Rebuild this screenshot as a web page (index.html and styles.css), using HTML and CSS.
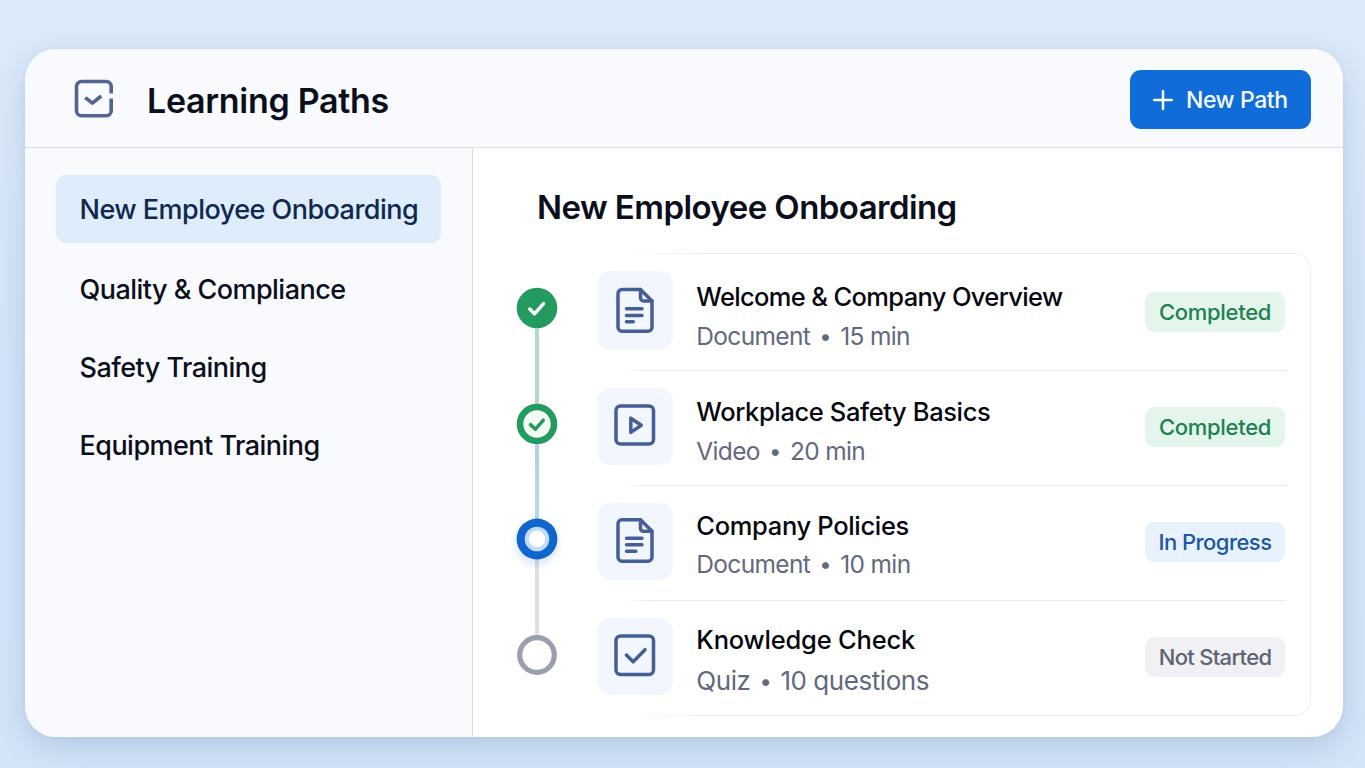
FILE: index.html
```html
<!DOCTYPE html>
<html lang="en">
<head>
<meta charset="utf-8">
<title>Learning Paths</title>
<link rel="stylesheet" href="styles.css">
</head>
<body>
<div class="app">
  <header class="header">
    <svg class="logo" viewBox="0 0 40 40" width="40" height="40">
      <path d="M37.2 14.5V7.5a5 5 0 0 0-5-5H7.5a5 5 0 0 0-5 5v24.2a5 5 0 0 0 5 5h24.7a5 5 0 0 0 5-5V19.5"/>
      <path d="M11.2 18.6l7.2 5.6 8.8-7.2"/>
    </svg>
    <h1 class="app-title">Learning Paths</h1>
    <button class="new-path">
      <svg viewBox="0 0 20 20" width="20" height="20"><path d="M10 1v18M1 10h18"/></svg>
      <span>New Path</span>
    </button>
  </header>
  <div class="body">
    <nav class="sidebar">
      <a class="nav-item active">New Employee Onboarding</a>
      <a class="nav-item">Quality &amp; Compliance</a>
      <a class="nav-item">Safety Training</a>
      <a class="nav-item">Equipment Training</a>
    </nav>
    <main class="content">
      <h2 class="path-title">New Employee Onboarding</h2>
      <div class="path">
        <div class="timeline">
          <svg class="dot" viewBox="0 0 42 42"><circle class="green-fill" cx="21" cy="21" r="20.3"/><path class="check white" d="M13.8 22.1l4.7 4.7 9-10.2"/></svg>
          <div class="line line-green"></div>
          <svg class="dot" viewBox="0 0 42 42"><circle class="green-ring" cx="21" cy="21" r="17"/><path class="check green" d="M14.5 21.6l4.9 4.6 8-9"/></svg>
          <div class="line line-blue"></div>
          <svg class="dot dot-current" viewBox="0 0 42 42"><circle class="blue-fill" cx="21" cy="21" r="20.4"/><circle class="blue-light" cx="21" cy="21" r="12.3"/><circle class="core" cx="21" cy="21" r="8.2"/></svg>
          <div class="line line-gray"></div>
          <svg class="dot" viewBox="0 0 42 42"><circle class="gray-ring" cx="21" cy="21" r="17.3"/></svg>
        </div>
        <div class="steps">
          <section class="step step-1">
            <div class="tile"><svg viewBox="0 0 48 48" width="48" height="48"><path d="M29.5 3.5H11a4 4 0 0 0-4 4v33.7a4 4 0 0 0 4 4h26a4 4 0 0 0 4-4V15z"/><path d="M29.5 3.5v8.5a3 3 0 0 0 3 3H41"/><path d="M15.5 22.8h15.5M15.5 29.5h15.5M15.5 35.8h6.8"/></svg></div>
            <div class="info"><h3 class="name">Welcome &amp; Company Overview</h3><p class="meta">Document<i>•</i>15 min</p></div>
            <span class="badge done">Completed</span>
          </section>
          <section class="step step-2">
            <div class="tile"><svg viewBox="0 0 48 48" width="48" height="48"><rect x="5" y="4" width="37.5" height="38" rx="4.5"/><path d="M19.8 16.2v14.2l10.5-7.1z"/></svg></div>
            <div class="info"><h3 class="name">Workplace Safety Basics</h3><p class="meta">Video<i>•</i>20 min</p></div>
            <span class="badge done">Completed</span>
          </section>
          <section class="step step-3">
            <div class="tile"><svg viewBox="0 0 48 48" width="48" height="48"><path d="M29.5 2.8H11a4 4 0 0 0-4 4v33.4a4 4 0 0 0 4 4h26a4 4 0 0 0 4-4V14.3z"/><path d="M29.5 2.8v8.5a3 3 0 0 0 3 3H41"/><path d="M15.5 21.2h15.5M15.5 27.8h15.5M15.5 34.2h9.3"/></svg></div>
            <div class="info"><h3 class="name">Company Policies</h3><p class="meta">Document<i>•</i>10 min</p></div>
            <span class="badge progress">In Progress</span>
          </section>
          <section class="step step-4">
            <div class="tile"><svg viewBox="0 0 48 48" width="48" height="48"><rect x="5" y="4" width="37.5" height="38.5" rx="4.5"/><path d="M15.4 23l6.8 6.8L34 17.7"/></svg></div>
            <div class="info"><h3 class="name">Knowledge Check</h3><p class="meta">Quiz<i>•</i>10 questions</p></div>
            <span class="badge idle">Not Started</span>
          </section>
        </div>
      </div>
    </main>
  </div>
</div>
</body>
</html>
```

FILE: styles.css
```css
* { box-sizing: border-box; margin: 0; padding: 0; }
body {
  width: 1365px; height: 768px; overflow: hidden;
  padding: 49px 22px 31px 24.5px;
  font-family: Inter, "Liberation Sans", sans-serif;
  background: linear-gradient(180deg, #dcebfa 0%, #d5e5f8 50%, #d4e5f7 100%);
  color: #0b0f1c;
}
.app {
  height: 688px; display: flex; flex-direction: column; overflow: hidden;
  border-radius: 31px; background: #fff;
  box-shadow: 0 10px 30px rgba(70, 105, 160, .24), 0 0 4px rgba(90, 120, 160, .06);
}
.header {
  height: 99px; flex: none; display: flex; align-items: center;
  padding: 2px 32px 0 49.5px; background: #f8fafe; border-bottom: 1px solid #d9dde4;
}
.logo { fill: none; stroke: #52658f; stroke-width: 3.6; stroke-linejoin: round; }
.app-title { flex: 1; margin: 4px 0 0 33px; font-size: 34px; line-height: 40px; font-weight: 600; letter-spacing: -.3px; white-space: nowrap; }
.new-path {
  width: 181px; height: 59px; display: flex; align-items: center; gap: 13px; padding-left: 23px;
  border: 0; border-radius: 11px; background: #106cd8; color: #f6fbff;
  font: 500 23px/30px Inter, sans-serif; letter-spacing: -.45px; white-space: nowrap;
}
.new-path span { margin-top: 2px; }
.new-path svg { margin-top: 1px; fill: none; stroke: #f6fbff; stroke-width: 2.5; stroke-linecap: round; }
.body { flex: 1; display: flex; }
.sidebar {
  width: 448px; flex: none; padding: 27px 31px 0 31px; background: #f8fafe;
  border-right: 1px solid #d9dde4; display: flex; flex-direction: column;
}
.nav-item {
  height: 78px; padding-left: 24px; display: flex; align-items: center;
  font-size: 27px; font-weight: 450; letter-spacing: -.53px; white-space: nowrap;
}
.nav-item.active { height: 68px; margin-bottom: 7px; border-radius: 10px; background: #deecfc; color: #10284f; }
.content { flex: 1; padding: 39px 32px 0 44.5px; }
.path-title { margin-left: 20px; font-size: 33px; line-height: 40px; font-weight: 600; letter-spacing: -.56px; white-space: nowrap; }
.path { display: flex; margin-top: 26px; }
.timeline { width: 42px; flex: none; display: flex; flex-direction: column; align-items: center; padding-top: 35px; margin-left: -1px; }
.dot { width: 42px; height: 42px; flex: none; margin: -1px 0; overflow: visible; }
.dot-current { filter: drop-shadow(0 4px 5px rgba(30, 90, 180, .2)); }
.green-fill { fill: #239b5f; }
.green-ring { fill: #f3fdf6; stroke: #239b5f; stroke-width: 6.6; }
.blue-fill { fill: #0f66cc; }
.blue-light { fill: #c3dbfa; }
.core { fill: #fff; }
.gray-ring { fill: #fff; stroke: #999eb1; stroke-width: 5.2; }
.check { fill: none; stroke-width: 3.5; stroke-linecap: round; stroke-linejoin: round; }
.check.white { stroke: #fff; }
.check.green { stroke: #239b5f; }
.line { width: 4px; height: 76px; }
.line-green { background: #b0dcc7; }
.line-blue { height: 75px; background: linear-gradient(#b7cde6, #bdd6f0); }
.line-gray { height: 76px; background: #dddfe3; }
.steps { position: relative; flex: 1; margin-left: 39px; padding-top: 1px; }
.steps::before {
  content: ""; position: absolute; inset: 0 0 0 20px; pointer-events: none;
  border: 1.5px solid #ebedf0; border-left: 0; border-radius: 0 16px 16px 0;
  -webkit-mask-image: linear-gradient(90deg, transparent 8px, #000 90px);
  mask-image: linear-gradient(90deg, transparent 8px, #000 90px);
}
.step {
  position: relative; height: 115px; display: grid; grid-template-columns: 76px 1fr 140px;
  column-gap: 23.3px; padding-right: 26px; align-items: start;
}
.step-1 { height: 117px; }
.step + .step::before {
  content: ""; position: absolute; top: -1.5px; left: 26px; right: 25px; height: 1.5px;
  background: linear-gradient(90deg, transparent, #e7e9ec 30px);
}
.tile {
  height: 77px; margin-top: 16.5px; border-radius: 14px; background: #f2f6fe;
  display: flex; align-items: center; justify-content: center;
}
.tile svg { fill: none; stroke: #455f96; stroke-width: 3.5; stroke-linecap: round; stroke-linejoin: round; }
.step-1 .tile { height: 79px; }
.info { padding-top: 25px; white-space: nowrap; }
.name { font-size: 25.5px; line-height: 32px; font-weight: 450; letter-spacing: -.38px; color: #05070e; }
.meta { margin-top: 6.5px; font-size: 24.5px; line-height: 32px; letter-spacing: -.65px; color: #62697e; }
.meta i { display: inline-block; width: 30px; text-align: center; font-style: normal; font-size: 22px; line-height: 20px; vertical-align: 1px; }
.badge {
  height: 40px; margin-top: 36px; border-radius: 9px; font-size: 22px; line-height: 41px;
  font-weight: 500; letter-spacing: -.3px; text-align: center; white-space: nowrap;
}
.done { background: #e4f6eb; color: #21804f; }
.progress { background: #e8f2fe; color: #1d56a0; letter-spacing: -.55px; }
.idle { background: #eff1f5; color: #5f6472; letter-spacing: -.7px; }
.step-1 .info { padding-top: 27px; }
.step-1 .name { letter-spacing: -.65px; }
.step-1 .badge { margin-top: 38px; }
.step-3 .info { padding-top: 23.5px; }
.step-3 .name { letter-spacing: -.33px; }
.step-4 .info { padding-top: 23px; }
.step-4 .name { letter-spacing: -.2px; }
.step-4 .meta { margin-top: 9px; font-size: 26px; letter-spacing: -.45px; }
```
